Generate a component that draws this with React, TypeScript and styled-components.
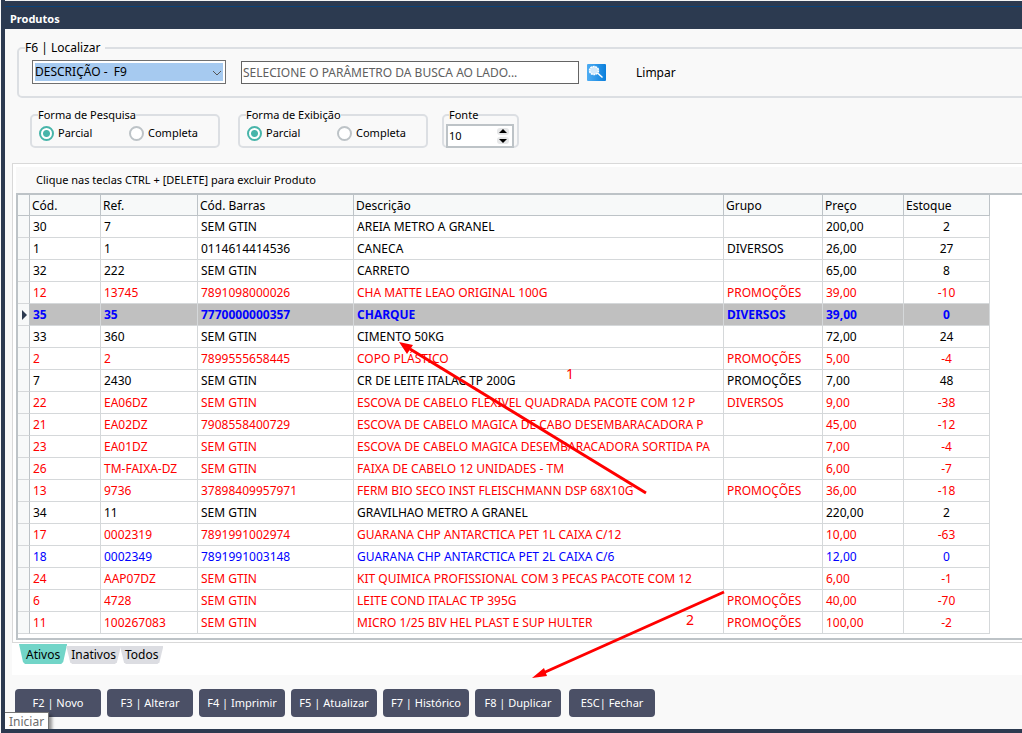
import React from "react";
import styled, { createGlobalStyle, css } from "styled-components";

const GlobalStyle = createGlobalStyle`
  *, *::before, *::after { box-sizing: border-box; }
  body {
    margin: 0;
    background: #f9f9f9;
    color: #000;
    font: 13px/18px "Noto Sans", "Open Sans", sans-serif;
  }
  button, input, select { font: inherit; color: inherit; }
`;

const Window = styled.div`
  position: relative;
  overflow: hidden;
  min-height: 100vh;
  margin-left: 1px;
  display: flex;
  flex-direction: column;
  background: #f9f9f9;
  border-left: 4px solid #2c3a50;
  border-bottom: 4px solid #2c3a50;
`;

const TopStrip = styled.div`
  height: 7px;
  background: #2c3a50;
  border-top: 1px solid #f4f4f4;
  border-bottom: 1px solid #0b4277;
`;

const TitleBar = styled.h1`
  margin: 0;
  height: 22px;
  padding: 3px 5px;
  background: #2c3a50;
  color: #fff;
  font-size: 11px;
  line-height: 18px;
  font-weight: 700;
`;

const GroupBox = styled.fieldset`
  margin: 0;
  min-width: 0;
  border: 2px solid #dcdfe3;
  border-radius: 5px;
`;

const SearchBox = styled(GroupBox)`
  margin: 10px -8px 0 12px;
  padding: 3px 13px 12px;
  & > legend { padding: 0 4px 0 0; margin-left: -7px; font-size: 12px; }
`;

const SearchRow = styled.div`
  display: flex;
  align-items: center;
`;

const SelectFrame = styled.div`
  position: relative;
  width: 194px;
  height: 24px;
  padding: 2px;
  border: 1px solid #707070;
  background: #fff;
`;

const ParamSelect = styled.select`
  display: block;
  width: 100%;
  height: 18px;
  padding: 0;
  border: 0;
  border-radius: 0;
  outline: 0;
  appearance: none;
  background: #a6caf0;
  font-size: 12px;
  line-height: 18px;
  white-space: pre;
`;

const Chevron = styled.svg`
  position: absolute;
  right: 3px;
  top: 9px;
  pointer-events: none;
`;

const SearchInput = styled.input`
  width: 338px;
  height: 23px;
  margin: 0 8px 0 15px;
  padding: 0 1px;
  border: 1px solid #646464;
  background: #fff;
  font-size: 12px;
  &::placeholder { color: #606060; opacity: 1; }
`;

const IconButton = styled.button`
  display: block;
  padding: 0;
  border: 0;
  background: none;
  line-height: 0;
`;

const PlainButton = styled.button`
  margin-left: 30px;
  padding: 2px 0 0;
  border: 0;
  background: none;
  font-size: 12px;
`;

const Options = styled.div`
  display: flex;
  align-items: flex-start;
  margin: 8px 0 15px 25px;
  gap: 18px;
`;

const OptionBox = styled(GroupBox)<{ $narrow?: boolean }>`
  width: ${(p) => (p.$narrow ? 77 : 190)}px;
  height: 42px;
  padding: ${(p) => (p.$narrow ? "0 2px" : "0 7px")};
  margin-left: ${(p) => (p.$narrow ? -4 : 0)}px;
  font-size: 11px;
  & > legend { padding: 0; margin-left: ${(p) => (p.$narrow ? 3 : -1)}px; }
`;

const RadioRow = styled.div`
  display: grid;
  grid-template-columns: 90px 1fr;
`;

const RadioLabel = styled.label`
  display: flex;
  align-items: center;
  gap: 4px;
`;

const Radio = styled.input`
  appearance: none;
  width: 15px;
  height: 15px;
  margin: 0;
  border: 2px solid #bdc3c7;
  border-radius: 50%;
  background: #fff;
  &:checked {
    border-color: #48b5aa;
    background: radial-gradient(circle, #48b5aa 3px, #fff 4px);
  }
`;

const SpinFrame = styled.div`
  display: flex;
  align-items: center;
  height: 24px;
  margin-right: 1px;
  border: 2px solid #bdc3c7;
  background: #fff;
`;

const SpinInput = styled.input`
  flex: 1;
  min-width: 0;
  height: 20px;
  padding: 0 1px 2px;
  border: 0;
  background: none;
`;

const Panel = styled.section`
  margin-left: 7px;
  padding: 3px 0 2px 3px;
  border: 1px solid #d9d9d9;
  border-right: 0;
  background: #fff;
`;

const Hint = styled.p`
  margin: 0;
  padding: 4px 20px;
  background: #f9f9f9;
  font-size: 11px;
  line-height: 18px;
`;

const Grid = styled.div`
  padding-bottom: 4px;
  border: 2px solid #bdc3c7;
  border-right: 0;
  overflow: hidden;
`;

const Table = styled.table`
  width: 972px;
  table-layout: fixed;
  border-collapse: separate;
  border-spacing: 0;
  font-size: 12px;
  th, td {
    height: 22px;
    padding: 1px 0 0 3px;
    border-right: 1px solid #d5d8da;
    border-bottom: 1px solid #d5d8da;
    overflow: hidden;
    white-space: nowrap;
    text-align: left;
    font-weight: inherit;
    line-height: 20px;
  }
  thead th { height: 21px; padding-left: 2px; background: #f7f9f9; border-color: #bdc3c7; line-height: 19px; }
  td:first-child { background: #f7f9f9; border-right-color: #bdc3c7; line-height: 0; }
  td:last-child { text-align: center; padding-left: 0; }
`;

type Tone = "black" | "red" | "blue";

const Row = styled.tr<{ $tone: Tone; $current: boolean }>`
  color: ${(p) => ({ black: "#000", red: "#ff0000", blue: "#0000ff" })[p.$tone]};
  ${(p) =>
    p.$current &&
    css`
      font-weight: 700;
      td:not(:first-child) { background: #c0c0c0; }
    `}
`;

const Tabs = styled.div`
  display: flex;
  height: 32px;
  margin-left: 7px;
  padding: 1px 0 0 7px;
  background: #fff;
`;

const Tab = styled.button<{ $active?: boolean }>`
  height: ${(p) => (p.$active ? 20 : 18)}px;
  margin-top: ${(p) => (p.$active ? 0 : 2)}px;
  margin-right: -1px;
  padding: ${(p) => (p.$active ? "2px 7px 0" : "0 5px")};
  border: 0;
  background: ${(p) => (p.$active ? "#72d5c8" : "#dcdde2")};
  clip-path: polygon(0 0, 100% 0, calc(100% - 4px) 90%, calc(100% - 6px) 100%, 6px 100%, 4px 90%);
  font-size: 12px;
  line-height: 18px;
`;

const Footer = styled.footer`
  display: flex;
  gap: 6px;
  padding: 14px 10px 12px;
`;

const ActionButton = styled.button<{ $last?: boolean }>`
  width: 86px;
  height: 28px;
  margin-left: ${(p) => (p.$last ? 2 : 0)}px;
  padding: 0;
  border: 0;
  border-radius: 4px;
  background: #4b5066;
  color: #fff;
  font-size: 11px;
  white-space: nowrap;
`;

const Tooltip = styled.div`
  position: absolute;
  left: -1px;
  bottom: -3px;
  padding: 0 4px;
  border: 1px solid #767676;
  background: #fff;
  color: #6d6d6d;
  font-size: 12px;
  box-shadow: 3px 3px 3px rgba(0, 0, 0, 0.4);
`;

const Annotations = styled.svg`
  position: absolute;
  left: -5px;
  top: 0;
  pointer-events: none;
`;

const columns = [
  { label: "", width: 12 },
  { label: "Cód.", width: 71 },
  { label: "Ref.", width: 97 },
  { label: "Cód. Barras", width: 156 },
  { label: "Descrição", width: 370 },
  { label: "Grupo", width: 99 },
  { label: "Preço", width: 81 },
  { label: "Estoque", width: 86 },
];

const products: [Tone, ...string[]][] = [
  ["black", "30", "7", "SEM GTIN", "AREIA METRO A GRANEL", "", "200,00", "2"],
  ["black", "1", "1", "0114614414536", "CANECA", "DIVERSOS", "26,00", "27"],
  ["black", "32", "222", "SEM GTIN", "CARRETO", "", "65,00", "8"],
  ["red", "12", "13745", "7891098000026", "CHA MATTE LEAO ORIGINAL 100G", "PROMOÇÕES", "39,00", "-10"],
  ["blue", "35", "35", "7770000000357", "CHARQUE", "DIVERSOS", "39,00", "0"],
  ["black", "33", "360", "SEM GTIN", "CIMENTO 50KG", "", "72,00", "24"],
  ["red", "2", "2", "7899555658445", "COPO PLÁSTICO", "PROMOÇÕES", "5,00", "-4"],
  ["black", "7", "2430", "SEM GTIN", "CR DE LEITE ITALAC TP 200G", "PROMOÇÕES", "7,00", "48"],
  ["red", "22", "EA06DZ", "SEM GTIN", "ESCOVA DE CABELO FLEXIVEL QUADRADA PACOTE COM 12 P", "DIVERSOS", "9,00", "-38"],
  ["red", "21", "EA02DZ", "7908558400729", "ESCOVA DE CABELO MAGICA DE CABO DESEMBARACADORA P", "", "45,00", "-12"],
  ["red", "23", "EA01DZ", "SEM GTIN", "ESCOVA DE CABELO MAGICA DESEMBARACADORA SORTIDA PA", "", "7,00", "-4"],
  ["red", "26", "TM-FAIXA-DZ", "SEM GTIN", "FAIXA DE CABELO 12 UNIDADES - TM", "", "6,00", "-7"],
  ["red", "13", "9736", "37898409957971", "FERM BIO SECO INST FLEISCHMANN DSP 68X10G", "PROMOÇÕES", "36,00", "-18"],
  ["black", "34", "11", "SEM GTIN", "GRAVILHAO METRO A GRANEL", "", "220,00", "2"],
  ["red", "17", "0002319", "7891991002974", "GUARANA CHP ANTARCTICA PET 1L CAIXA C/12", "", "10,00", "-63"],
  ["blue", "18", "0002349", "7891991003148", "GUARANA CHP ANTARCTICA PET 2L CAIXA C/6", "", "12,00", "0"],
  ["red", "24", "AAP07DZ", "SEM GTIN", "KIT QUIMICA PROFISSIONAL COM 3 PECAS PACOTE COM 12", "", "6,00", "-1"],
  ["red", "6", "4728", "SEM GTIN", "LEITE COND ITALAC TP 395G", "PROMOÇÕES", "40,00", "-70"],
  ["red", "11", "100267083", "SEM GTIN", "MICRO 1/25 BIV HEL PLAST E SUP HULTER", "PROMOÇÕES", "100,00", "-2"],
];

const actions = ["F2 | Novo", "F3 | Alterar", "F4 | Imprimir", "F5 | Atualizar", "F7 | Histórico", "F8 | Duplicar", "ESC| Fechar"];

function SearchIcon() {
  return (
    <svg width="19" height="17" viewBox="0 0 19 17" aria-hidden="true">
      <defs>
        <linearGradient id="lens" x1="0" x2="1">
          <stop offset="0" stopColor="#4fadf3" />
          <stop offset="1" stopColor="#0a7fdc" />
        </linearGradient>
      </defs>
      <rect width="19" height="17" rx="1" fill="url(#lens)" />
      <ellipse cx="7" cy="6.500" rx="4.500" ry="4" fill="#cfe8fb" stroke="#fff" strokeWidth="1.500" strokeDasharray="2 0.6" />
      <path d="M10.500 9L15.500 13.500" stroke="#fff" strokeWidth="1.500" />
    </svg>
  );
}

function RadioGroup({ title, name }: { title: string; name: string }) {
  return (
    <OptionBox>
      <legend>{title}</legend>
      <RadioRow>
        <RadioLabel><Radio type="radio" name={name} defaultChecked />Parcial</RadioLabel>
        <RadioLabel><Radio type="radio" name={name} />Completa</RadioLabel>
      </RadioRow>
    </OptionBox>
  );
}

export default function App() {
  return (
    <>
      <GlobalStyle />
      <Window>
        <TopStrip />
        <TitleBar>Produtos</TitleBar>

        <SearchBox>
          <legend>F6 | Localizar</legend>
          <SearchRow>
            <SelectFrame>
              <ParamSelect aria-label="Localizar por">
                <option>{"DESCRIÇÃO -\u00a0 F9"}</option>
              </ParamSelect>
              <Chevron width="10" height="6" viewBox="0 0 10 6" aria-hidden="true">
                <path d="M1 1l4 4 4-4" fill="none" stroke="#555" />
              </Chevron>
            </SelectFrame>
            <SearchInput aria-label="Busca" placeholder="SELECIONE O PARÂMETRO DA BUSCA AO LADO..." />
            <IconButton aria-label="Buscar"><SearchIcon /></IconButton>
            <PlainButton>Limpar</PlainButton>
          </SearchRow>
        </SearchBox>

        <Options>
          <RadioGroup title="Forma de Pesquisa" name="pesquisa" />
          <RadioGroup title="Forma de Exibição" name="exibicao" />
          <OptionBox $narrow>
            <legend>Fonte</legend>
            <SpinFrame>
              <SpinInput aria-label="Fonte" defaultValue="10" />
              <svg width="16" height="18" viewBox="0 0 14 18" aria-hidden="true">
                <rect x="0" y="1" width="12" height="7" rx="3" fill="#e6e7e8" />
                <rect x="0" y="10" width="12" height="7" rx="3" fill="#e6e7e8" />
                <path d="M2 6L6 2l4 4zM2 12L6 16l4-4z" />
              </svg>
            </SpinFrame>
          </OptionBox>
        </Options>

        <Panel>
          <Hint>Clique nas teclas CTRL + [DELETE] para excluir Produto</Hint>
          <Grid>
            <Table>
              <colgroup>
                {columns.map((c) => <col key={c.label} style={{ width: c.width }} />)}
              </colgroup>
              <thead>
                <tr>{columns.map((c) => <th key={c.label} scope="col">{c.label}</th>)}</tr>
              </thead>
              <tbody>
                {products.map(([tone, ...cells]) => (
                  <Row key={cells[0]} $tone={tone} $current={cells[0] === "35"}>
                    <td>
                      {cells[0] === "35" && (
                        <svg width="6" height="12" viewBox="0 0 6 12" aria-hidden="true">
                          <path d="M1 1l5 5-5 5z" fill="#2c3a50" />
                        </svg>
                      )}
                    </td>
                    {cells.map((text, i) => <td key={i}>{text}</td>)}
                  </Row>
                ))}
              </tbody>
            </Table>
          </Grid>
        </Panel>

        <Tabs role="tablist">
          <Tab role="tab" aria-selected $active>Ativos</Tab>
          <Tab role="tab">Inativos</Tab>
          <Tab role="tab">Todos</Tab>
        </Tabs>

        <Footer>
          {actions.map((label, i) => (
            <ActionButton key={label} $last={i === actions.length - 1}>{label}</ActionButton>
          ))}
        </Footer>

        <Tooltip role="tooltip">Iniciar</Tooltip>

        <Annotations width="740" height="690" viewBox="0 0 740 690" fill="#ff0000" fontSize="14">
          <path d="M646 493L410 349M724 592L543 673" stroke="#ff0000" strokeWidth="3" />
          <path d="M399 342l14 3-6 9zM532 678l12-10 3 8z" />
          <text x="566" y="379">1</text>
          <text x="686" y="625">2</text>
        </Annotations>
      </Window>
    </>
  );
}
